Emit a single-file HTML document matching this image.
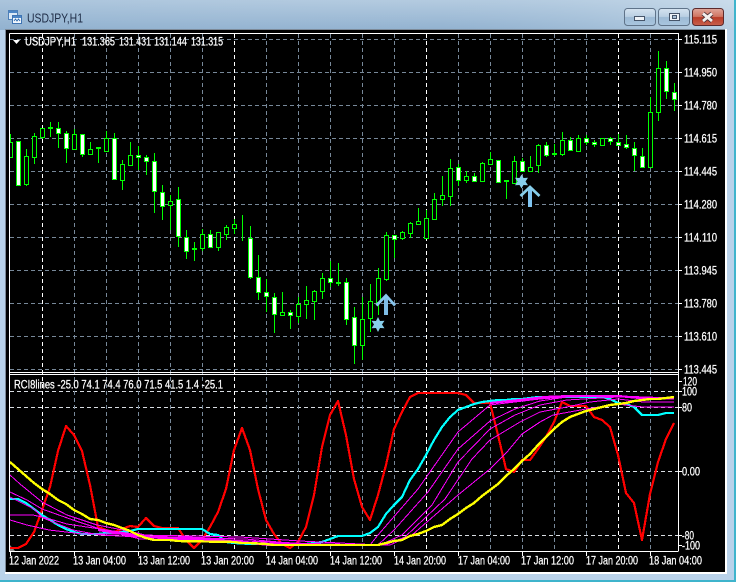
<!DOCTYPE html>
<html><head><meta charset="utf-8"><title>USDJPY,H1</title>
<style>
html,body{margin:0;padding:0;background:#b9d2ea}
body{width:736px;height:582px;overflow:hidden;position:relative}
svg{position:absolute;left:0;top:0}
text{font-family:"Liberation Sans",sans-serif;font-size:11.5px;fill:#fff;stroke:#fff;stroke-width:.25px}
</style></head><body>
<svg width="736" height="582" viewBox="0 0 736 582" xmlns="http://www.w3.org/2000/svg">
<defs>
<linearGradient id="tb" x1="0" y1="0" x2="0" y2="1"><stop offset="0" stop-color="#b4cbe0"/><stop offset="1" stop-color="#92b2d0"/></linearGradient>
<linearGradient id="tbh" x1="0" y1="0" x2="1" y2="0"><stop offset="0" stop-color="#8fb0cf" stop-opacity=".25"/><stop offset=".6" stop-color="#a9c4dc" stop-opacity="0"/><stop offset="1" stop-color="#e2eef6" stop-opacity=".5"/></linearGradient>
<linearGradient id="btn" x1="0" y1="0" x2="0" y2="1"><stop offset="0" stop-color="#d5e3f0"/><stop offset=".48" stop-color="#b9cfe3"/><stop offset=".52" stop-color="#9dbad5"/><stop offset="1" stop-color="#a9c6df"/></linearGradient>
<linearGradient id="cl" x1="0" y1="0" x2="0" y2="1"><stop offset="0" stop-color="#e0a79b"/><stop offset=".48" stop-color="#cf7462"/><stop offset=".52" stop-color="#b93c28"/><stop offset="1" stop-color="#c8604c"/></linearGradient>
<clipPath id="cm"><rect x="10" y="34" width="668" height="338"/></clipPath>
<clipPath id="cs"><rect x="10" y="375" width="668" height="176"/></clipPath>
</defs>
<!-- frame -->
<rect x="0" y="0" width="736" height="582" fill="#b9d2ea"/>
<rect x="0" y="0" width="736" height="30" fill="url(#tb)"/>
<rect x="0" y="0" width="736" height="30" fill="url(#tbh)"/>
<rect x="734" y="0" width="2" height="582" fill="#3fb4cc"/>
<rect x="0" y="580" width="736" height="2" fill="#3fb4cc"/>
<rect x="5" y="29" width="722" height="545" fill="#fff"/>
<rect x="5" y="29" width="720" height="543" fill="#000"/>
<rect x="5" y="29" width="720" height="1" fill="#7d8a98"/>
<rect x="5" y="29" width="1" height="543" fill="#7d8a98"/>
<!-- title -->
<g shape-rendering="crispEdges">
<rect x="8.5" y="10.5" width="9" height="9" fill="#dce9f6" stroke="#4d7fb8"/>
<rect x="9" y="11" width="8" height="2" fill="#4d86c6"/>
<rect x="12.5" y="15.5" width="9" height="8" fill="#f2f7fc" stroke="#3f74b4"/>
<rect x="13" y="16" width="8" height="2" fill="#4d86c6"/>
</g>
<path d="M14 21l1.5-2 1.5 2 1.5-2 1.5 2" fill="none" stroke="#2f6bb0" stroke-width=".9"/>
<text x="27" y="22.5" style="font-size:13px;fill:#1f2d47;stroke:none" textLength="56" lengthAdjust="spacingAndGlyphs">USDJPY,H1</text>
<!-- buttons -->
<rect x="624.5" y="8.5" width="31" height="17" rx="3" fill="url(#btn)" stroke="#5f7389"/>
<rect x="634.5" y="16.5" width="10" height="4" fill="#eef3f8" stroke="#46556a" shape-rendering="crispEdges"/>
<rect x="658.5" y="8.5" width="31" height="17" rx="3" fill="url(#btn)" stroke="#5f7389"/>
<rect x="669.5" y="13.5" width="10" height="7" fill="#eef3f8" stroke="#46556a" shape-rendering="crispEdges"/>
<rect x="672.5" y="15.5" width="4" height="3" fill="#a9c0d6" stroke="#46556a" shape-rendering="crispEdges"/>
<rect x="692.5" y="8.5" width="31" height="17" rx="3" fill="url(#cl)" stroke="#5c2a2c"/>
<path d="M703 13.5l9 7.5M712 13.5l-9 7.5" stroke="#4a3036" stroke-width="4.5" fill="none"/>
<path d="M703 13.5l9 7.5M712 13.5l-9 7.5" stroke="#f4f0ee" stroke-width="2.8" fill="none"/>
<!-- grid -->
<g shape-rendering="crispEdges" fill="none" stroke-width="1">
<path stroke="#778899" stroke-dasharray="4 3" d="M10 39.5H678M10 72.5H678M10 105.5H678M10 138.5H678M10 171.5H678M10 204.5H678M10 237.5H678M10 270.5H678M10 303.5H678M10 336.5H678M10 369.5H678"/>
<path stroke="#d8dde2" stroke-dasharray="4 3" d="M10 391.5H678M10 407.5H678M10 471.5H678M10 535.5H678"/>
<path stroke="#778899" stroke-dasharray="4 3" d="M74.5 34V551M106.5 34V551M138.5 34V551M170.5 34V551M202.5 34V551M266.5 34V551M298.5 34V551M330.5 34V551M362.5 34V551M394.5 34V551M458.5 34V551M490.5 34V551M522.5 34V551M554.5 34V551M586.5 34V551M650.5 34V551"/>
<path stroke="#fff" stroke-dasharray="4 3" d="M42.5 34V551M234.5 34V551M426.5 34V551M618.5 34V551"/>
<path stroke="#fff" d="M9.5 33.5H678.5V551M9.5 33.5V551.5H678.5M9.5 372.5H678.5M9.5 374.5H678.5"/>
<path stroke="#fff" d="M679 39.5h3M679 72.5h3M679 105.5h3M679 138.5h3M679 171.5h3M679 204.5h3M679 237.5h3M679 270.5h3M679 303.5h3M679 336.5h3M679 369.5h3M679 381.5h3M679 391.5h3M679 407.5h3M679 471.5h3M679 535.5h3M679 545.5h3M10.5 552v4M74.5 552v4M138.5 552v4M202.5 552v4M266.5 552v4M330.5 552v4M394.5 552v4M458.5 552v4M522.5 552v4M586.5 552v4M650.5 552v4"/>
</g>
<path d="M10 545l5 6h-5z" fill="#8a8a8a"/>
<!-- candles -->
<g clip-path="url(#cm)" shape-rendering="crispEdges">
<path fill="none" stroke="#00ff00" d="M10.5 134V157M18.5 141V186M26.5 149V186M34.5 133V164M42.5 128V139M50.5 122V137M58.5 122V148M66.5 131V163M74.5 129V149M82.5 134V157M90.5 142V154M98.5 147V163M106.5 131V152M114.5 133V179M122.5 160V190M130.5 142V166M138.5 146V170M146.5 155V175M154.5 153V213M162.5 185V220M170.5 195V230M178.5 187V247M186.5 230V259M194.5 242V261M202.5 229V251M210.5 230V247M218.5 232V251M226.5 225V240M234.5 219V234M242.5 215V241M250.5 226V279M258.5 255V300M266.5 279V312M274.5 293V333M282.5 292V315M290.5 310V329M298.5 297V323M306.5 286V319M314.5 290V320M322.5 273V299M330.5 261V287M338.5 263V286M346.5 278V325M354.5 307V364M362.5 297V360M370.5 284V332M378.5 268V315M386.5 232V281M394.5 235V258M402.5 231V240M410.5 222V238M418.5 208V225M426.5 210V238M434.5 193V219M442.5 176V206M450.5 159V206M458.5 164V186M466.5 171V183M474.5 173V182M482.5 162V181M490.5 152V164M498.5 160V183M506.5 180V199M514.5 156V184M522.5 158V172M530.5 156V172M538.5 144V173M546.5 142V157M554.5 144V156M562.5 132V156M570.5 137V151M578.5 135V151M586.5 135V145M594.5 140V147M602.5 138V145M610.5 137V145M618.5 134V145M626.5 135V149M634.5 142V171M642.5 148V168M650.5 97V168M658.5 51V121M666.5 61V99M674.5 83V111"/>
<path fill="#000" stroke="#00ff00" d="M8.5 142.5h4v15h-4zM24.5 156.5h4v28h-4zM32.5 136.5h4v21h-4zM40.5 128.5h4v9h-4zM72.5 134.5h4v15h-4zM88.5 149.5h4v5h-4zM104.5 138.5h4v13h-4zM120.5 164.5h4v16h-4zM128.5 155.5h4v10h-4zM168.5 201.5h4v4h-4zM200.5 234.5h4v14h-4zM216.5 232.5h4v15h-4zM224.5 227.5h4v7h-4zM232.5 224.5h4v4h-4zM280.5 312.5h4v3h-4zM296.5 304.5h4v12h-4zM304.5 300.5h4v4h-4zM312.5 291.5h4v10h-4zM320.5 278.5h4v13h-4zM360.5 319.5h4v26h-4zM368.5 301.5h4v17h-4zM376.5 278.5h4v24h-4zM384.5 235.5h4v44h-4zM400.5 232.5h4v6h-4zM408.5 223.5h4v10h-4zM416.5 221.5h4v3h-4zM424.5 218.5h4v20h-4zM432.5 199.5h4v20h-4zM440.5 195.5h4v4h-4zM448.5 168.5h4v28h-4zM464.5 176.5h4v4h-4zM480.5 163.5h4v18h-4zM488.5 159.5h4v5h-4zM512.5 161.5h4v22h-4zM528.5 167.5h4v4h-4zM536.5 145.5h4v20h-4zM560.5 140.5h4v14h-4zM576.5 138.5h4v13h-4zM600.5 138.5h4v7h-4zM648.5 112.5h4v55h-4zM656.5 68.5h4v44h-4z"/>
<path fill="#fff" stroke="#00ff00" d="M16.5 141.5h4v44h-4zM56.5 128.5h4v5h-4zM64.5 133.5h4v15h-4zM80.5 134.5h4v20h-4zM112.5 138.5h4v41h-4zM136.5 155.5h4v2h-4zM144.5 157.5h4v4h-4zM152.5 161.5h4v30h-4zM160.5 192.5h4v14h-4zM176.5 199.5h4v37h-4zM184.5 237.5h4v14h-4zM208.5 234.5h4v13h-4zM248.5 238.5h4v39h-4zM256.5 277.5h4v15h-4zM264.5 292.5h4v4h-4zM272.5 297.5h4v17h-4zM288.5 312.5h4v3h-4zM328.5 278.5h4v4h-4zM344.5 282.5h4v37h-4zM352.5 317.5h4v28h-4zM392.5 235.5h4v4h-4zM456.5 167.5h4v13h-4zM472.5 176.5h4v5h-4zM496.5 160.5h4v22h-4zM520.5 161.5h4v10h-4zM544.5 145.5h4v10h-4zM568.5 140.5h4v10h-4zM584.5 138.5h4v4h-4zM592.5 142.5h4v2h-4zM608.5 138.5h4v3h-4zM616.5 142.5h4v3h-4zM624.5 144.5h4v3h-4zM632.5 148.5h4v7h-4zM640.5 156.5h4v11h-4zM664.5 68.5h4v23h-4zM672.5 92.5h4v7h-4z"/>
<path fill="#00ff00" d="M48 127h5v2h-5zM96 147h5v2h-5zM192 248h5v2h-5zM336 282h5v2h-5zM504 180h5v2h-5zM552 153h5v2h-5z"/>
</g>
<!-- objects -->
<polygon fill="#87ceeb" points="378,317 380,321 384.5,320.8 382,324.5 384.5,328.2 380,328 378,332 376,328 371.5,328.2 374,324.5 371.5,320.8 376,321"/>
<polygon fill="#87ceeb" points="521.5,174.5 523.5,178 528,177.8 525.5,181.5 528,185.2 523.5,185 521.5,188.5 519.5,185 515,185.2 517.5,181.5 515,177.8 519.5,178"/>
<path d="M386 297V315" stroke="#7fbde6" stroke-width="4" fill="none"/>
<path d="M376.5 305.5L386 295.5L395 305.5" stroke="#87c5ee" stroke-width="2.8" fill="none"/>
<path d="M530 189V207" stroke="#7fc4f0" stroke-width="4" fill="none"/>
<path d="M520.5 196L530 187L539.5 196" stroke="#87ceeb" stroke-width="2.8" fill="none"/>
<!-- indicator -->
<g clip-path="url(#cs)" fill="none" stroke-linejoin="round" shape-rendering="crispEdges">
<polyline stroke="#ff0000" stroke-width="2.2" points="10,548 18,548 26,544 34,532 42,510 50,487 58,451 66,426 74,435 82,451 90,485 98,527 106,530 114,532 122,529 130,526 138,527 146,518 154,526 162,528 170,528 178,528 186,540 194,548 202,540 210,527 218,512 226,489 234,450 242,428 250,450 258,489 266,520 274,534 282,544 290,548 298,542 306,527 314,495 322,447 330,415 338,401 346,435 354,479 362,507 370,520 378,495 386,465 394,429 402,412 410,397 418,393 426,393 434,393 442,393 450,393 458,393 466,395 474,403 482,403 490,403 498,435 506,469 514,472 522,460 530,460 538,449 546,437 554,422 562,402 570,406 578,406 586,406 594,417 602,420 610,427 618,455 626,493 634,503 642,540 650,494 658,462 666,439 674,423"/>
<polyline stroke="#00ffff" stroke-width="2.2" points="10,499 18,499 26,503 34,509 42,515 50,520 58,525 66,529 74,532 82,534 90,534 98,534 106,533 114,533 122,532 130,531 138,529 146,529 202,529 210,534 218,535 226,542 234,543 250,544 306,544 314,543 322,542 330,539 338,536 362,536 370,533 378,527 386,514 394,505 402,497 410,480 418,469 426,455 434,440 442,427 450,417 458,410 466,407 474,404 482,402 490,401 498,400 506,400 514,399 522,399 530,398 538,397 594,397 602,397 610,399 618,403 626,404 634,407 642,415 650,415 658,415 666,413 674,413"/>
<g stroke="#ff00ff" stroke-width="1">
<polyline points="10,475 20,484 42,502 67,515 97,525 133,532 153,537 245,539 290,543 370,545 378,535 418,489 458,432 490,405 515,402 540,399 567,397 618,396 643,399 674,399"/>
<polyline points="10,492 27,500 42,509 73,520 100,529 140,539 250,541 340,545 378,545 394,530 428,492 458,449 490,421 515,409 540,401 567,397 618,396 674,398"/>
<polyline points="10,515 33,515 50,519 67,524 100,529 140,535 240,537 300,541 380,545 402,535 432,505 458,462 490,429 515,415 540,405 567,400 618,397 674,399"/>
<polyline points="10,520 27,525 49,530 83,534 127,534 147,538 230,540 300,544 385,545 405,537 445,499 472,459 490,440 520,422 540,412 567,407 590,402 618,399 643,402 674,402"/>
<polyline points="10,497 34,509 43,518 73,530 100,535 140,537 250,543 390,545 412,535 458,495 490,469 507,452 522,434 540,422 553,415 586,409 617,404 643,407 674,407"/>
</g>
<polyline stroke="#ff00ff" stroke-width="2.2" points="98,530 130,535 150,537 200,538 240,542 270,545 300,545"/>
<polyline stroke="#ff00ff" stroke-width="2.2" points="490,403 520,400 545,397 570,396 618,396 640,398 650,399"/>
<polyline stroke="#ffff00" stroke-width="2.4" points="10,462 18,469 26,476 34,483 42,489 50,494 58,500 66,504 74,510 82,514 90,519 98,520 106,523 114,525 122,528 130,531 138,535 146,538 154,540 162,540 170,540 178,541 234,542 242,543 250,543 266,544 274,545 378,545 386,543 394,541 402,540 410,536 418,534 426,531 434,527 442,525 450,519 458,514 466,508 474,503 482,496 490,490 498,484 506,476 514,469 522,461 530,454 538,445 546,437 554,429 562,422 570,417 578,414 586,411 594,409 602,407 610,405 618,404 626,403 634,401 642,400 650,399 658,399 666,398 674,397"/>
</g>
<!-- legends -->
<path d="M13 40h7l-3.5 4z" fill="#fff"/>
<text x="25" y="45.5" textLength="51" lengthAdjust="spacingAndGlyphs">USDJPY,H1</text>
<text x="82" y="45.5" textLength="33" lengthAdjust="spacingAndGlyphs">131.365</text>
<text x="119" y="45.5" textLength="32" lengthAdjust="spacingAndGlyphs">131.431</text>
<text x="154" y="45.5" textLength="33" lengthAdjust="spacingAndGlyphs">131.144</text>
<text x="191" y="45.5" textLength="32" lengthAdjust="spacingAndGlyphs">131.315</text>
<text x="14" y="388.5" textLength="209" lengthAdjust="spacingAndGlyphs">RCI8lines -25.0 74.1 74.4 76.0 71.5 41.5 1.4 -25.1</text>
<!-- price axis -->
<g>
<text x="684" y="43.5" textLength="33" lengthAdjust="spacingAndGlyphs">115.115</text>
<text x="684" y="76.5" textLength="33" lengthAdjust="spacingAndGlyphs">114.950</text>
<text x="684" y="109.5" textLength="33" lengthAdjust="spacingAndGlyphs">114.780</text>
<text x="684" y="142.5" textLength="33" lengthAdjust="spacingAndGlyphs">114.615</text>
<text x="684" y="175.5" textLength="33" lengthAdjust="spacingAndGlyphs">114.445</text>
<text x="684" y="208.5" textLength="33" lengthAdjust="spacingAndGlyphs">114.280</text>
<text x="684" y="241.5" textLength="33" lengthAdjust="spacingAndGlyphs">114.110</text>
<text x="684" y="274.5" textLength="33" lengthAdjust="spacingAndGlyphs">113.945</text>
<text x="684" y="307.5" textLength="33" lengthAdjust="spacingAndGlyphs">113.780</text>
<text x="684" y="340.5" textLength="33" lengthAdjust="spacingAndGlyphs">113.610</text>
<text x="684" y="373.5" textLength="33" lengthAdjust="spacingAndGlyphs">113.445</text>
<text x="683" y="385.5" textLength="14" lengthAdjust="spacingAndGlyphs">120</text>
<text x="682" y="395.5" textLength="15" lengthAdjust="spacingAndGlyphs">100</text>
<text x="682" y="411.5" textLength="10" lengthAdjust="spacingAndGlyphs">80</text>
<text x="682" y="475.5" textLength="18" lengthAdjust="spacingAndGlyphs">0.00</text>
<text x="682" y="539.5" textLength="12" lengthAdjust="spacingAndGlyphs">-80</text>
<text x="682" y="549.5" textLength="18" lengthAdjust="spacingAndGlyphs">-100</text>
</g>
<!-- time axis -->
<g>
<text x="9" y="564.5" textLength="50" lengthAdjust="spacingAndGlyphs">12 Jan 2022</text>
<text x="73" y="564.5" textLength="53" lengthAdjust="spacingAndGlyphs">13 Jan 04:00</text>
<text x="138" y="564.5" textLength="52" lengthAdjust="spacingAndGlyphs">13 Jan 12:00</text>
<text x="201" y="564.5" textLength="53" lengthAdjust="spacingAndGlyphs">13 Jan 20:00</text>
<text x="266" y="564.5" textLength="52" lengthAdjust="spacingAndGlyphs">14 Jan 04:00</text>
<text x="330" y="564.5" textLength="52" lengthAdjust="spacingAndGlyphs">14 Jan 12:00</text>
<text x="394" y="564.5" textLength="52" lengthAdjust="spacingAndGlyphs">14 Jan 20:00</text>
<text x="458" y="564.5" textLength="52" lengthAdjust="spacingAndGlyphs">17 Jan 04:00</text>
<text x="521" y="564.5" textLength="53" lengthAdjust="spacingAndGlyphs">17 Jan 12:00</text>
<text x="586" y="564.5" textLength="52" lengthAdjust="spacingAndGlyphs">17 Jan 20:00</text>
<text x="649" y="564.5" textLength="53" lengthAdjust="spacingAndGlyphs">18 Jan 04:00</text>
</g>
</svg>
</body></html>
